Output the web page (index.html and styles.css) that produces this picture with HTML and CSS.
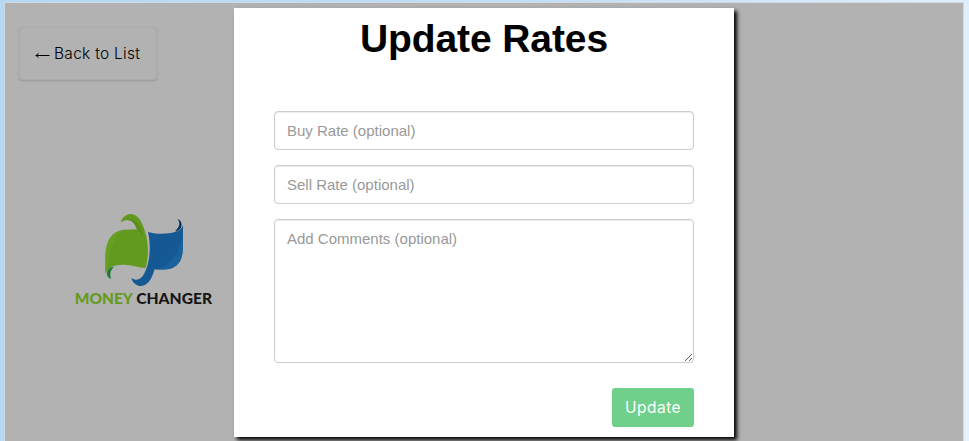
FILE: index.html
```
<!DOCTYPE html>
<html lang="en">
<head>
<meta charset="utf-8">
<title>Update Rates</title>
<link rel="stylesheet" href="styles.css">
</head>
<body>
<main class="page">
  <button class="back" type="button">
    <svg class="arrow" width="15" height="8" viewBox="0 0 15 8"><path d="M.8 3.500H14.500M3.300 1.300C2.900 2.500 2.100 3.200.8 3.500c1.300.3 2.100 1 2.500 2.200" fill="none" stroke="#000"/></svg>
    <span>Back to List</span>
  </button>
  <svg class="logo" width="150" height="105" viewBox="70 205 150 105">
    <path fill="#629a1f" d="M105.300 273.500V258C105.500 241 111 231.500 124 229.700L137 229.300C134 221.500 130 217 120.500 222C123 216 128 213.500 132.500 214.200C139 215.500 143.500 224 146.500 237C149 249 148 260 145.500 268C137 267.500 129 263.500 120 265C112 265.500 107.500 268.500 105.300 273.500Z"/>
    <path fill="#548718" d="M120.500 222C130 217 134 221.500 137 229.300L143 236C141 225 133 213 120.500 222Z" opacity=".6"/>
    <path fill="#6aa325" d="M105.300 273.500V258C105.500 241 111 231.500 124 229.700C114 235 110 249 107 270Z" opacity=".6"/>
    <path fill="#1f7a36" d="M114 266.800C110 267 107.500 269.500 106.800 273C107 276 108.500 278.500 111.300 278.800C109.500 275 110 270.500 114 266.800Z"/>
    <path fill="#145894" d="M148 232C160 235.500 172 233.500 179 230.500Q182 228.500 183 225.300V246C183 260 178.500 269.500 163.500 269.500H154.500C151.500 280.500 146.500 286.500 139.500 286C136 285.500 132 282 131.500 278C136.500 281.500 141 279.500 144 274C149.500 264 151.500 248 148 232Z"/>
    <path fill="#1b68a3" d="M183 232C181 250 174 263 157 269.500H163.500C178.500 269.500 183 260 183 246Z" opacity=".65"/>
    <path fill="#082e5c" d="M177.500 219C182 220 183 227 179.500 229.500Q177.500 231 175 231C180 227 180.500 223 177.500 219Z"/>
    <text class="brand green" x="74.700" y="303.800" textLength="58.300" lengthAdjust="spacingAndGlyphs">MONEY</text>
    <text class="brand dark" x="136.200" y="303.800" textLength="76" lengthAdjust="spacingAndGlyphs">CHANGER</text>
  </svg>
</main>
<form class="modal">
  <h1>Update Rates</h1>
  <input type="text" placeholder="Buy Rate (optional)">
  <input type="text" placeholder="Sell Rate (optional)">
  <textarea placeholder="Add Comments (optional)"></textarea>
  <button class="update" type="button">Update</button>
</form>
</body>
</html>
```
FILE: styles.css
```
* { box-sizing: border-box; }
html { height: 100%; overflow: hidden; }
body {
  margin: 0;
  height: 441px;
  padding: 2px 5px 0 4px;
  background: linear-gradient(100deg, #b4d9f5, #c2def5 50%, #e4f2fd);
  font-family: "Liberation Sans", Arial, sans-serif;
  font-size: 15px;
  overflow: hidden;
}
.page {
  display: flex;
  flex-direction: column;
  align-items: flex-start;
  height: 439px;
  padding: 24px 14px 0;
  border: 1px solid #d2d9df;
  border-bottom: 0;
  background: #b2b2b2;
}
.back {
  display: flex;
  align-items: center;
  gap: 4px;
  width: 138px;
  height: 53px;
  padding: 0 0 0 15px;
  border: 1px solid #acacac;
  border-radius: 3px;
  background: #b2b2b2;
  box-shadow: 0 1px 2px rgba(0, 0, 0, .16);
  color: #000;
  font: 300 15.500px Inter, sans-serif;
  letter-spacing: .28px;
  white-space: nowrap;
}
.arrow { flex: none; margin-top: 4px; }
.logo { margin: 125px 0 0 51px; }
.brand { font: 900 15.800px Lato, sans-serif; }
.green { fill: #639a20; }
.dark { fill: #161616; }
.modal {
  position: absolute;
  left: 234px;
  top: 8px;
  display: flex;
  flex-direction: column;
  width: 500px;
  height: 429px;
  padding: 9px 40px 10px;
  background: #fff;
  box-shadow: 3px 3px 4px #000;
}
h1 {
  margin: 0 0 51px;
  color: #000;
  font-size: 39px;
  line-height: 43px;
  letter-spacing: -.1px;
  text-align: center;
}
input, textarea {
  display: block;
  flex: none;
  width: 420px;
  height: 39px;
  margin: 0 0 15px;
  padding: 8px 12px;
  border: 1px solid #ccc;
  border-radius: 4px;
  background: #fff;
  box-shadow: inset 0 1px 1px rgba(0, 0, 0, .075);
  font: 15px/21px "Liberation Sans", Arial, sans-serif;
}
textarea { height: 144px; margin-bottom: 25px; resize: vertical; }
::placeholder { color: #999; opacity: 1; }
.update {
  align-self: flex-end;
  width: 82px;
  height: 39px;
  padding: 0;
  border: 0;
  border-radius: 3px;
  background: #6fcf8b;
  color: #fff;
  font: 400 15.500px Inter, sans-serif;
  letter-spacing: .5px;
}
```
